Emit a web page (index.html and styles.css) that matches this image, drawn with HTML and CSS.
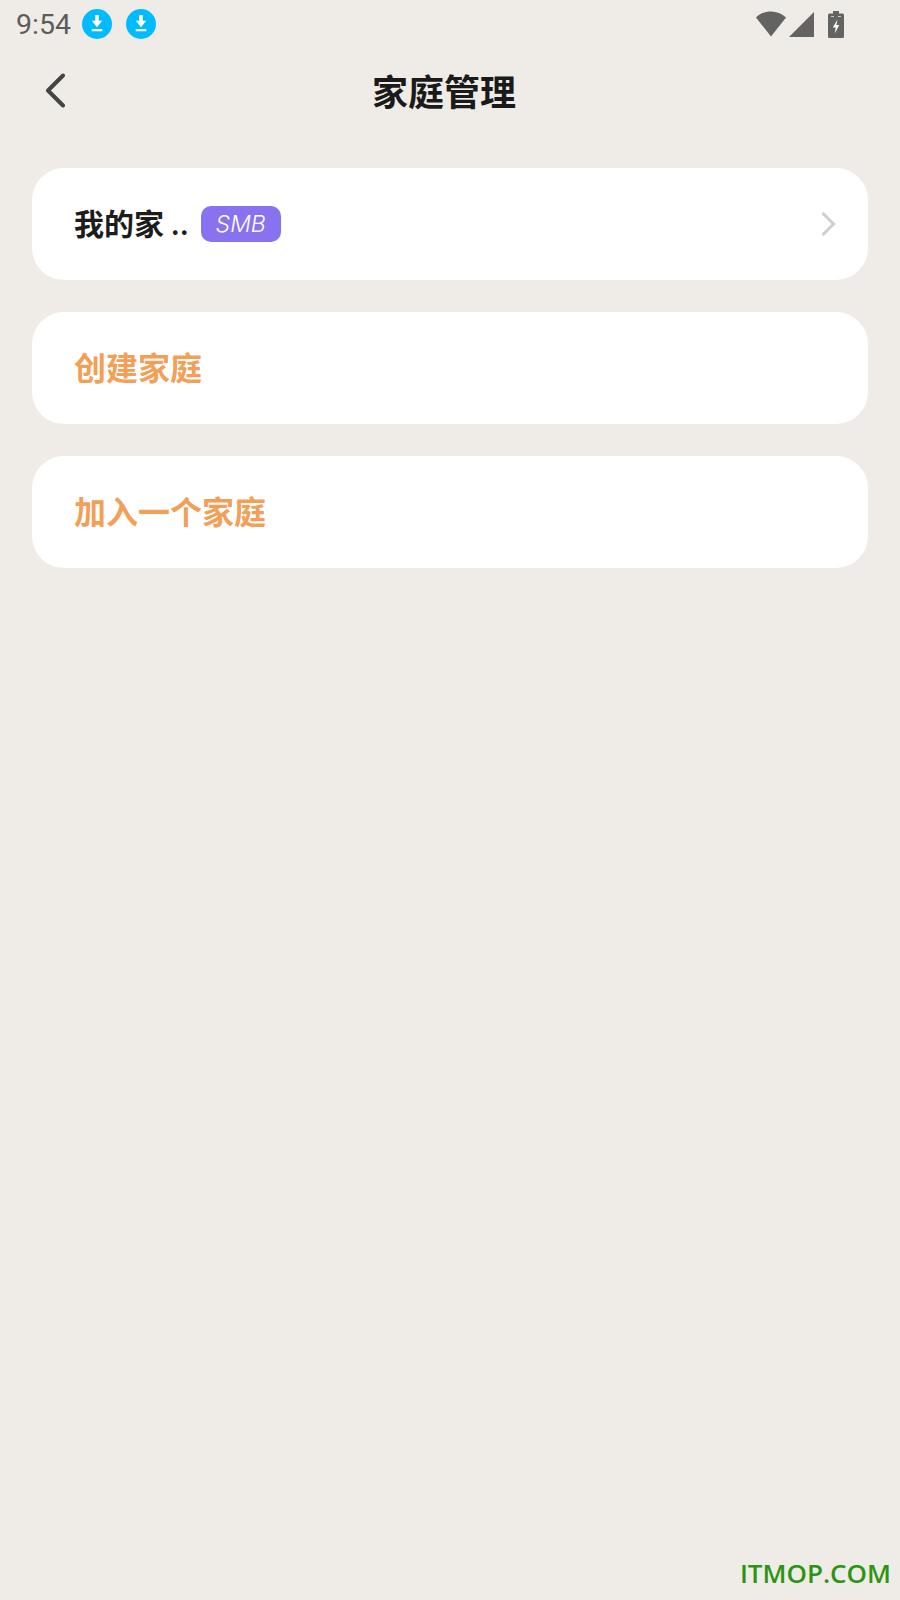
FILE: index.html
```html
<!DOCTYPE html>
<html lang="zh-CN">
<head>
  <meta charset="UTF-8">
  <title>家庭管理</title>
  <link rel="stylesheet" href="styles.css">
</head>
<body>
<div class="screen">
  <div class="status-bar">
    <span class="time">9:54</span>
    <svg class="dl-icon" viewBox="0 0 30 30"><circle cx="15" cy="15" r="15" fill="#00bcff"/><path d="M13.2 6h3.600v5.800h3.400L15 18.200 9.800 11.800h3.400zM9.700 20h10.600v2.300H9.700z" fill="#fff"/></svg>
    <svg class="dl-icon dl-second" viewBox="0 0 30 30"><circle cx="15" cy="15" r="15" fill="#00bcff"/><path d="M13.2 6h3.600v5.800h3.400L15 18.200 9.800 11.800h3.400zM9.700 20h10.600v2.300H9.700z" fill="#fff"/></svg>
    <div class="status-right">
      <svg class="wifi" viewBox="0 0 30 26"><path d="M0 6.500C8-1.500 22-1.500 30 6.500L15 25.500z" fill="#636361"/></svg>
      <svg class="signal" viewBox="0 0 25 25"><path d="M25 0v25H0z" fill="#636361"/></svg>
      <svg class="battery" viewBox="0 0 16 27"><path d="M5 0h6v2.500h3.500a1.500 1.500 0 0 1 1.500 1.500v21.500a1.500 1.500 0 0 1-1.500 1.500h-13A1.500 1.500 0 0 1 0 25.500V4a1.500 1.500 0 0 1 1.500-1.500H5z" fill="#636361"/><path d="M9.500 8.500L4.800 16.500h2.900L6.800 22.500l4.500-8.500H8.400z" fill="#fff"/><path d="M3 5h3v1H3zM10 5h3v1h-3z" fill="#c9c9c7"/></svg>
    </div>
  </div>

  <header class="nav-bar">
    <svg class="back" viewBox="0 0 24 36"><path d="M20 3.500L5 18.500l15 15" fill="none" stroke="#444" stroke-width="4" stroke-linecap="round" stroke-linejoin="round"/></svg>
    <h1>家庭管理</h1>
  </header>

  <main class="cards">
    <div class="card">
      <span class="home-name">我的家 <span class="dots">..</span></span>
      <span class="tag">SMB</span>
      <svg class="arrow" viewBox="0 0 16 26"><path d="M2.500 2l11 11-11 11" fill="none" stroke="#cfcfcf" stroke-width="3"/></svg>
    </div>
    <div class="card"><span class="action">创建家庭</span></div>
    <div class="card"><span class="action">加入一个家庭</span></div>
  </main>

  <div class="watermark">ITMOP.COM</div>
</div>
</body>
</html>
```

FILE: styles.css
```css
* { box-sizing: border-box; }
html, body { margin: 0; padding: 0; }
body { background: #efece8; font-family: "Noto Sans CJK SC", "Noto Sans", sans-serif; }
.screen { position: relative; width: 900px; height: 1600px; background: #efece8; overflow: hidden; }

.status-bar {
  display: flex;
  align-items: center;
  height: 48px;
  padding-left: 16px;
}
.time {
  font-family: Roboto, sans-serif;
  font-size: 28.500px;
  color: #5c5c5a;
  width: 66px;
}
.dl-icon { width: 30px; height: 30px; flex: none; }
.dl-second { margin-left: 14px; }
.status-right {
  display: flex;
  align-items: center;
  margin-left: auto;
  padding-right: 56px;
}
.wifi { width: 30px; height: 26px; }
.signal { width: 25px; height: 25px; margin-left: 3px; }
.battery { width: 16px; height: 27px; margin-left: 14px; }

.nav-bar {
  position: relative;
  height: 88px;
  display: flex;
  align-items: center;
  justify-content: center;
  padding-right: 12px;
}
.nav-bar h1 {
  margin: 0 0 4px;
  font-size: 36px;
  font-weight: 700;
  color: #1a1a1a;
}
.back { position: absolute; left: 43px; top: 24px; width: 24px; height: 36px; }

.cards {
  display: flex;
  flex-direction: column;
  gap: 32px;
  padding: 32px 32px 0;
}
.card {
  display: flex;
  align-items: center;
  height: 112px;
  padding: 0 32px 0 42px;
  background: #fff;
  border-radius: 32px;
}
.home-name {
  margin-bottom: 4px;
  font-size: 30px;
  font-weight: 700;
  color: #1c1c1c;
}
.dots { font-weight: 500; }
.tag {
  display: flex;
  align-items: center;
  justify-content: center;
  width: 80px;
  height: 36px;
  margin-left: 12px;
  background: #8872ef;
  border-radius: 10px;
  color: #fff;
  font-family: Inter, sans-serif;
  font-size: 23px;
  font-style: italic;
  font-weight: 300;
}
.arrow { width: 16px; height: 26px; margin-left: auto; }
.action {
  margin-bottom: 4px;
  font-size: 32px;
  font-weight: 700;
  color: #f29f57;
}

.watermark {
  position: absolute;
  right: 9px;
  bottom: 9px;
  font-family: "Open Sans", sans-serif;
  font-size: 26px;
  font-weight: 600;
  color: #2a9512;
}
```
